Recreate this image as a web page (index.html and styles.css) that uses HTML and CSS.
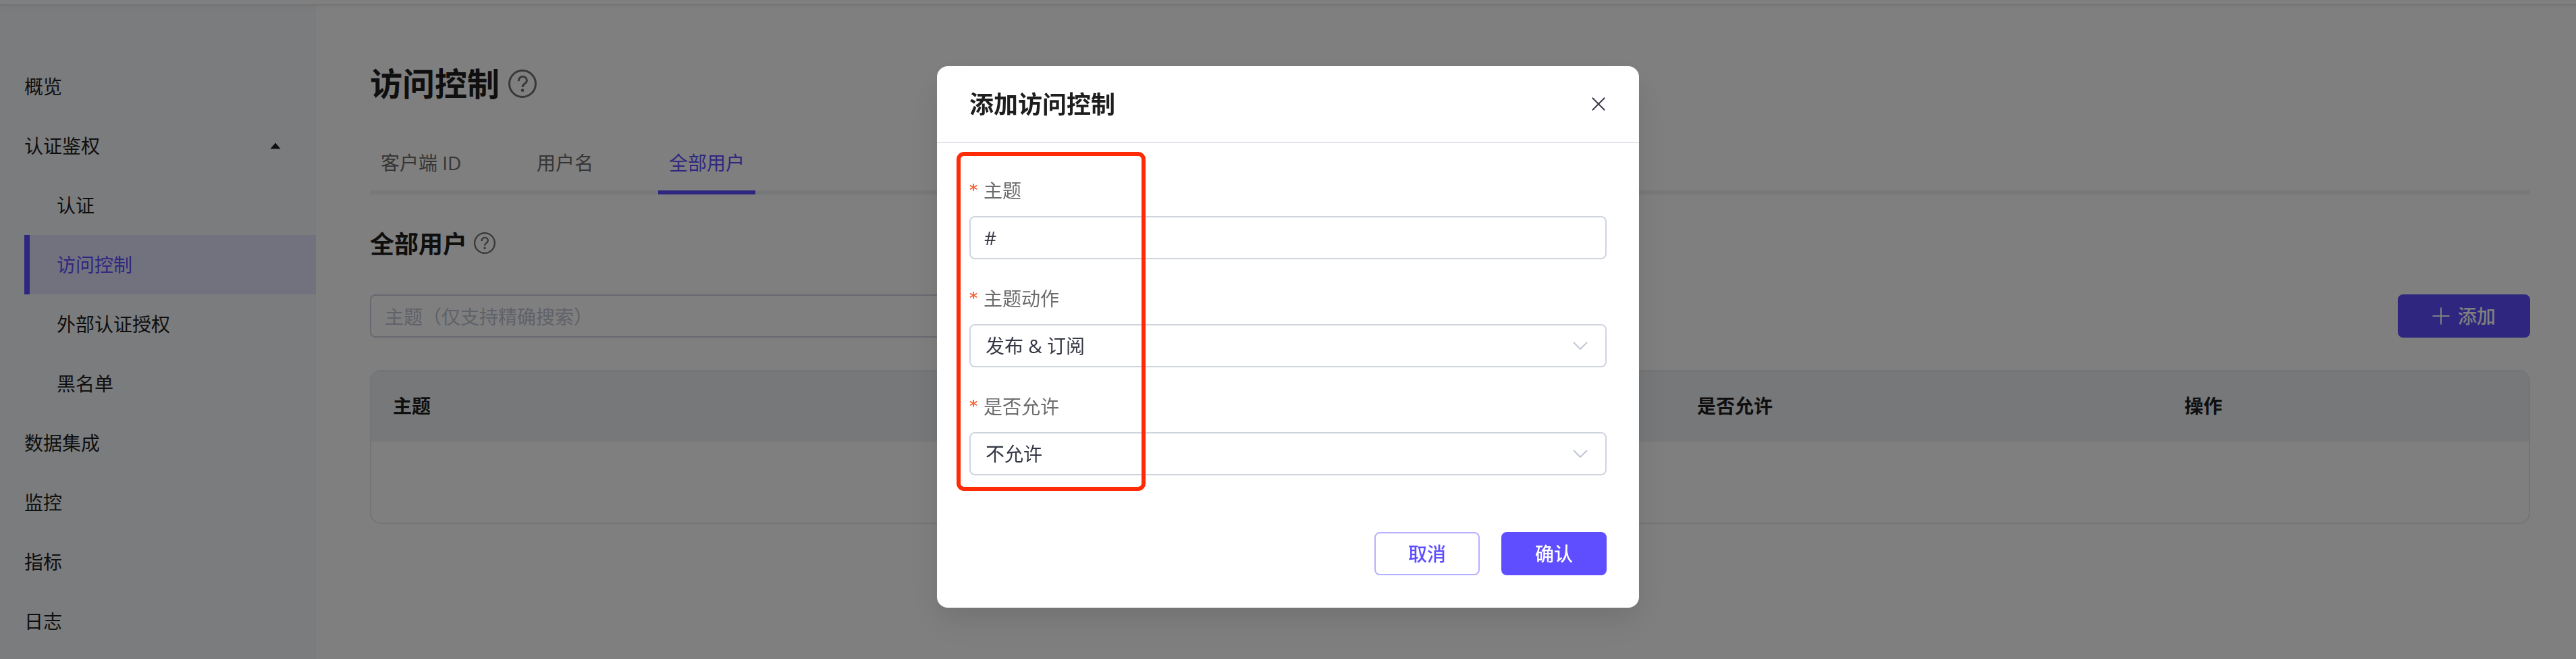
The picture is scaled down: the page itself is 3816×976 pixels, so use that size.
FILE: index.html
```html
<!DOCTYPE html>
<html lang="zh-CN">
<head>
<meta charset="utf-8">
<title>访问控制</title>
<link rel="stylesheet" href="styles.css">
</head>
<body>
<div class="app">
  <header class="topbar"></header>
  <div class="body">
    <nav class="sidebar">
      <a class="nav-item">概览</a>
      <a class="nav-item nav-group">认证鉴权
        <svg class="caret" viewBox="0 0 16 10"><path d="M8 0.5L15.6 9.5H0.4Z" fill="currentColor"/></svg>
      </a>
      <a class="nav-item nav-sub">认证</a>
      <a class="nav-item nav-sub active">访问控制</a>
      <a class="nav-item nav-sub">外部认证授权</a>
      <a class="nav-item nav-sub">黑名单</a>
      <a class="nav-item">数据集成</a>
      <a class="nav-item">监控</a>
      <a class="nav-item">指标</a>
      <a class="nav-item">日志</a>
    </nav>
    <main class="content">
      <h1 class="page-title">访问控制
        <svg class="help help-lg" viewBox="0 0 42 42"><circle cx="21" cy="21" r="19.5"/><path d="M15.2 17.2c0-4.3 2.6-6.8 6.1-6.8s6.1 2.4 6.1 5.8c0 4.8-6.3 4.6-6.3 9.8"/><circle class="dot" cx="21" cy="30.8" r="2.3"/></svg>
      </h1>
      <div class="tabs">
        <span class="tab">客户端 ID</span>
        <span class="tab">用户名</span>
        <span class="tab current">全部用户</span>
      </div>
      <h2 class="section-title"><span class="section-text">全部用户</span>
        <svg class="help help-sm" viewBox="0 0 42 42"><circle cx="21" cy="21" r="19.5"/><path d="M15.2 17.2c0-4.3 2.6-6.8 6.1-6.8s6.1 2.4 6.1 5.8c0 4.8-6.3 4.6-6.3 9.8"/><circle class="dot" cx="21" cy="30.8" r="2.3"/></svg>
      </h2>
      <div class="toolbar">
        <div class="search">主题（仅支持精确搜索）</div>
        <div class="btn btn-primary btn-add">
          <svg class="plus" viewBox="0 0 26 26"><path d="M13 0.5V25.5M0.5 13H25.5" stroke="currentColor" stroke-width="2" fill="none"/></svg>
          <span>添加</span>
        </div>
      </div>
      <div class="table">
        <div class="table-head">
          <span>主题</span><span>是否允许</span><span>操作</span>
        </div>
        <div class="table-body"></div>
      </div>
    </main>
  </div>
</div>
<div class="overlay">
  <div class="modal">
    <div class="modal-head">
      <span class="modal-title">添加访问控制</span>
      <svg class="close" viewBox="0 0 20 20"><path d="M0.8 0.8L19.2 19.2M19.2 0.8L0.8 19.2" stroke="currentColor" stroke-width="2" fill="none"/></svg>
    </div>
    <div class="modal-body">
      <div class="field-label"><i class="star">*</i>主题</div>
      <div class="field topic">#</div>
      <div class="field-label"><i class="star">*</i>主题动作</div>
      <div class="field select">发布 &amp; 订阅
        <svg class="chevron" viewBox="0 0 22 12"><path d="M1 1L11 11L21 1" stroke="currentColor" stroke-width="1.8" fill="none"/></svg>
      </div>
      <div class="field-label"><i class="star">*</i>是否允许</div>
      <div class="field select">不允许
        <svg class="chevron" viewBox="0 0 22 12"><path d="M1 1L11 11L21 1" stroke="currentColor" stroke-width="1.8" fill="none"/></svg>
      </div>
    </div>
    <div class="modal-foot">
      <div class="btn btn-plain">取消</div>
      <div class="btn btn-primary">确认</div>
    </div>
    <div class="highlight"></div>
  </div>
</div>
</body>
</html>
```
FILE: styles.css
```css
* { box-sizing: border-box; }
body {
  margin: 0;
  height: 976px;
  overflow: hidden;
  background: #fff;
  color: #1e1e1e;
  font: 28px/40px "Open Sans", "Noto Sans CJK SC", sans-serif;
}
.app { height: 976px; display: flex; flex-direction: column; }
.topbar {
  flex: none;
  height: 8px;
  border-bottom: 2px solid #e6e8ec;
  box-shadow: 0 2px 8px rgba(0, 0, 0, .05);
  position: relative;
}
.body { flex: 1; display: flex; min-height: 0; }

.sidebar { width: 468px; padding: 76px 0 0 36px; background: #f7f8fb; }
.nav-item { display: flex; align-items: center; height: 88px; }
.nav-group { justify-content: space-between; padding-right: 52px; }
.caret { width: 16px; height: 10px; }
.nav-sub { padding-left: 48px; }
.nav-sub.active {
  padding-left: 40px;
  border-left: 8px solid #5e4eff;
  background: #e5e2fc;
  color: #5e4eff;
}

.content { flex: 1; padding: 76px 68px 0 80px; }
.page-title, .section-title { display: flex; align-items: center; margin: 0; font-weight: 700; }
.page-title { height: 80px; font-size: 48px; gap: 13px; }
.help { fill: none; stroke: #707070; stroke-width: 3; }
.help .dot { fill: #707070; stroke: none; }
.help-lg { width: 42px; height: 42px; }
.help-sm { width: 32px; height: 32px; }

.tabs {
  display: flex;
  gap: 80px;
  height: 90px;
  margin-top: 34px;
  margin-bottom: 36px;
  border-bottom: 6px solid #eef0f4;
  color: #6c6c6c;
}
.tab { height: 90px; padding: 23px 16px 0; white-space: nowrap; }
.tab:first-child { width: 151px; }
.tab.current { color: #5e4eff; border-bottom: 6px solid #5e4eff; }

.section-title { height: 72px; font-size: 36px; gap: 10px; }
.section-text { padding-top: 3px; }
.toolbar { display: flex; justify-content: space-between; margin: 40px 0 48px; }
.search {
  width: 1000px;
  height: 64px;
  padding: 11px 20px;
  border: 2px solid #d0d3e0;
  border-radius: 8px;
  color: #c0c4d2;
}
.btn {
  display: flex;
  align-items: center;
  justify-content: center;
  width: 156px;
  height: 64px;
  border-radius: 8px;
  font-weight: 500;
}
.btn-primary { background: #5e4eff; color: #fff; }
.btn-plain { border: 2px solid #b7b0ff; color: #5e4eff; }
.btn-add { width: 196px; gap: 12px; }
.plus { width: 26px; height: 26px; }

.table { height: 228px; border: 2px solid #e7e9ec; border-radius: 16px; overflow: hidden; }
.table-head {
  display: grid;
  grid-template-columns: 1932px 722px 1fr;
  align-items: center;
  height: 104px;
  padding-left: 32px;
  background: #eff1f5;
  border-bottom: 2px solid #ebeef3;
  font-weight: 700;
}

.overlay {
  position: fixed;
  inset: 0;
  display: flex;
  align-items: flex-start;
  justify-content: center;
  padding-top: 98px;
  background: rgba(0, 0, 0, .5);
}
.modal {
  position: relative;
  width: 1040px;
  height: 802px;
  border-radius: 16px;
  background: #fff;
  box-shadow: 0 24px 64px 8px rgba(0, 0, 0, .04), 0 16px 40px rgba(0, 0, 0, .08);
}
.modal-head {
  display: flex;
  align-items: center;
  justify-content: space-between;
  height: 114px;
  padding: 0 50px 0 48px;
  border-bottom: 2px solid #e1e6ec;
}
.modal-title { padding-top: 2px; font-size: 36px; font-weight: 700; }
.close { width: 20px; height: 20px; color: #3b3e4b; }
.modal-body { padding: 40px 48px 0; }
.field-label { display: flex; height: 68px; padding-top: 10px; color: #6c6c6c; }
.field {
  height: 64px;
  margin-bottom: 28px;
  padding: 10px 20px;
  border: 2px solid #cfd4df;
  border-radius: 8px;
  color: #343744;
}
.topic { font-weight: 500; }
.star {
  width: 21px;
  font: bold 23px/38px "DejaVu Sans", sans-serif;
  color: #f7653b;
}
.select { display: flex; align-items: center; justify-content: space-between; padding: 0 26px 0 22px; }
.chevron { width: 22px; height: 12px; color: #bcc2d2; }
.modal-foot { display: flex; justify-content: flex-end; gap: 32px; padding: 56px 48px 0; }
.highlight {
  position: absolute;
  left: 29px;
  top: 127px;
  width: 280px;
  height: 502px;
  border: 6px solid #ff2a06;
  border-radius: 11px;
}
```
